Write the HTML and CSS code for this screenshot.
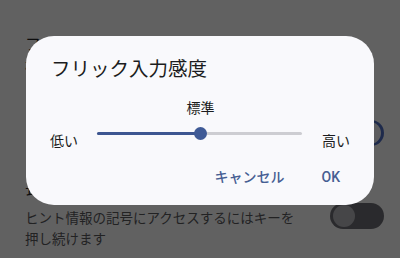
FILE: index.html
```html
<!DOCTYPE html>
<html lang="ja">
<head>
<meta charset="utf-8">
<link rel="stylesheet" href="styles.css">
</head>
<body>
<div class="screen">
  <div class="list">
    <div class="item item-first">
      <div class="item-text">
        <div class="item-title">フリック入力感度</div>
        <div class="item-summary">標準</div>
      </div>
    </div>
    <div class="item item-second">
      <div class="item-text">
        <div class="item-title">キー操作のバイブレーション</div>
        <div class="item-summary">キーを押したときに振動させます</div>
      </div>
      <div class="switch switch-on"><span class="knob"></span></div>
    </div>
    <div class="item item-third">
      <div class="item-text">
        <div class="item-title">長押しで記号を入力</div>
        <div class="item-summary">ヒント情報の記号にアクセスするにはキーを押し続けます</div>
      </div>
      <div class="switch switch-off"><span class="knob"></span></div>
    </div>
  </div>
  <div class="scrim"></div>
  <div class="dialog">
    <h2 class="dialog-title">フリック入力感度</h2>
    <div class="value-label">標準</div>
    <div class="slider-row">
      <span class="end-label">低い</span>
      <div class="slider">
        <div class="track"><div class="track-active" style="width:50%"></div></div>
        <span class="thumb" style="left:50%"></span>
      </div>
      <span class="end-label">高い</span>
    </div>
    <div class="actions">
      <button class="text-button">キャンセル</button>
      <button class="text-button">OK</button>
    </div>
  </div>
</div>
</body>
</html>
```
FILE: styles.css
```css
html, body {
  margin: 0;
  padding: 0;
}
body {
  width: 400px;
  height: 258px;
  overflow: hidden;
  font-family: Roboto, "Noto Sans CJK JP", sans-serif;
  background: #ffffff;
}
.screen {
  position: relative;
  width: 400px;
  height: 258px;
  overflow: hidden;
}
.list {
  display: flex;
  flex-direction: column;
}
.item {
  display: flex;
  align-items: center;
  padding: 0 16px 0 25px;
  box-sizing: border-box;
}
.item-text {
  flex: 1;
  min-width: 0;
}
.item-title {
  font-size: 16px;
  line-height: 22px;
  color: #222226;
}
.item-summary {
  font-size: 13.5px;
  line-height: 21px;
  color: #5a5a5e;
  width: 275px;
}
.item-first {
  height: 96px;
  padding-top: 34px;
  align-items: flex-start;
}
.item-second {
  height: 74px;
}
.item-third {
  padding-top: 8px;
  height: 92px;
  align-items: flex-start;
}
.item-third .item-summary {
  margin-top: 8px;
}
.item-third .switch {
  margin-top: 25px;
}
.switch {
  position: relative;
  width: 54px;
  height: 26px;
  border-radius: 13px;
  box-sizing: border-box;
  flex: none;
  margin-left: 16px;
}
.switch-on {
  background: #4f6fc4;
}
.switch-off {
  background: #707076;
}
.knob {
  position: absolute;
  top: 2px;
  width: 22px;
  height: 22px;
  border-radius: 50%;
}
.switch-on .knob {
  right: 3px;
  background: #f4f5fa;
}
.switch-off .knob {
  left: 3px;
  background: #b8b8be;
}
.scrim {
  position: absolute;
  inset: 0;
  background: rgba(0, 0, 0, 0.62);
}
.dialog {
  position: absolute;
  left: 26px;
  top: 36px;
  width: 348px;
  height: 169px;
  box-sizing: border-box;
  border-radius: 28px;
  background: #f9f9fc;
  padding: 22px 24px 0;
  display: flex;
  flex-direction: column;
}
.dialog-title {
  margin: 0 0 0 1px;
  font-size: 19.5px;
  line-height: 24px;
  font-weight: 400;
  color: #1b1c20;
}
.value-label {
  margin-top: 16px;
  font-size: 14px;
  line-height: 20px;
  color: #1b1c20;
  text-align: center;
  padding-left: 1px;
}
.slider-row {
  display: flex;
  align-items: flex-start;
  height: 35px;
}
.end-label {
  width: 28px;
  flex: none;
  padding-top: 13px;
  font-size: 14px;
  line-height: 20px;
  color: #1b1c20;
}
.slider {
  position: relative;
  flex: 1;
  height: 28px;
  margin: 0 20px 0 19px;
}
.track {
  position: absolute;
  left: 0;
  right: 0;
  top: 14px;
  height: 3px;
  border-radius: 2px;
  background: #cdcdd2;
}
.track-active {
  height: 100%;
  border-radius: 2px;
  background: #3d5691;
}
.thumb {
  position: absolute;
  top: 9px;
  width: 13px;
  height: 13px;
  margin-left: -6px;
  border-radius: 50%;
  background: #3f5a96;
}
.actions {
  display: flex;
  justify-content: flex-end;
  gap: 17px;
  margin-top: 4px;
}
.text-button {
  border: none;
  background: none;
  padding: 10px;
  font-family: Roboto, "Noto Sans CJK JP", sans-serif;
  font-size: 14px;
  line-height: 20px;
  font-weight: 500;
  color: #465e93;
  cursor: pointer;
}
```
